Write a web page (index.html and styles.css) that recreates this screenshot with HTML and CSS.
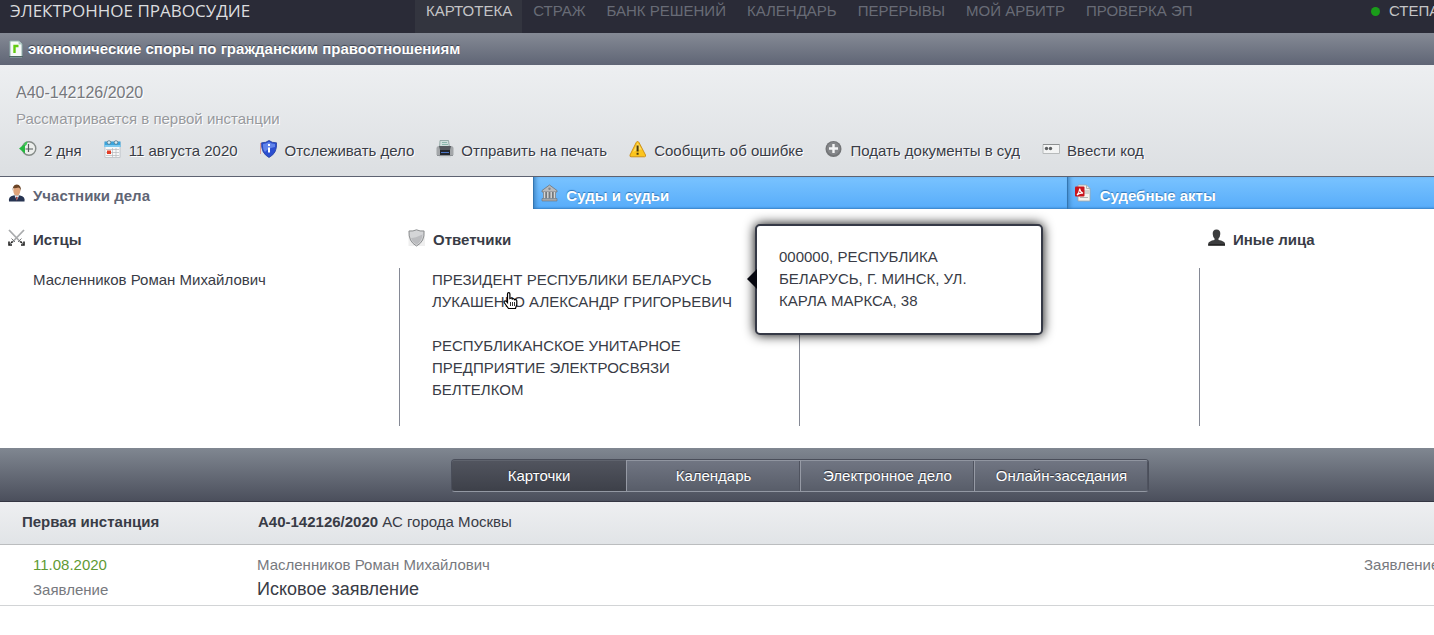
FILE: index.html
```html
<!DOCTYPE html>
<html lang="ru">
<head>
<meta charset="utf-8">
<title>А40-142126/2020 — Электронное правосудие</title>
<link rel="stylesheet" href="styles.css">
</head>
<body>
<div class="page">
  <header class="top">
    <div class="logo">ЭЛЕКТРОННОЕ ПРАВОСУДИЕ</div>
    <nav class="nav">
      <a class="nav-link nav-link-active" href="#">КАРТОТЕКА</a>
      <a class="nav-link" href="#">СТРАЖ</a>
      <a class="nav-link" href="#">БАНК РЕШЕНИЙ</a>
      <a class="nav-link" href="#">КАЛЕНДАРЬ</a>
      <a class="nav-link" href="#">ПЕРЕРЫВЫ</a>
      <a class="nav-link" href="#">МОЙ АРБИТР</a>
      <a class="nav-link" href="#">ПРОВЕРКА ЭП</a>
    </nav>
    <div class="user"><span class="user-dot"></span>СТЕПА</div>
  </header>

  <div class="category">
    <svg class="category-icon" width="14" height="18" viewBox="0 0 14 18"><path d="M1 1h9l3 3v13H1z" fill="#f6faf8" stroke="#8fb0ab"/><path d="M10 1v3h3" fill="#c5d8d4" stroke="#8fb0ab" stroke-width=".6"/><path d="M0 16.500h14" stroke="#4e6664"/><path d="M5.500 13V6H9.500" fill="none" stroke="#63cc12" stroke-width="2.400"/></svg>
    <h1 class="category-name">экономические споры по гражданским правоотношениям</h1>
  </div>

  <section class="case">
    <div class="case-number">А40-142126/2020</div>
    <div class="case-status">Рассматривается в первой инстанции</div>
    <div class="tools">
      <span class="tool">
        <svg class="tool-icon" width="18" height="18" viewBox="0 0 18 18"><circle cx="10" cy="8.500" r="6.800" fill="#eceeec" stroke="#858b88" stroke-width="1.400"/><path d="M9.500 4v5h4.500M6.500 9H10M9.500 9v3" fill="none" stroke="#555b5a" stroke-width="1.200"/><path d="M0 8.500 6 3.500V6Q8 5.500 8.500 1.500Q5 2 4.500 5z" fill="#3fca55"/><path d="M0 8.500 6 4v9.500z" fill="#25b93f"/></svg>
        <span>2 дня</span>
      </span>
      <span class="tool">
        <svg class="tool-icon" width="18" height="18" viewBox="0 0 18 18"><rect x="1" y="2" width="15" height="15.500" fill="#f8f8f8" stroke="#a9b0b6" stroke-width=".6"/><path d="M.5 1.500h16V7H.500z" fill="#3aa4dc"/><path d="M.5 5h16v2H.500z" fill="#7dcaf0"/><circle cx="5" cy="2.500" r="1.800" fill="#d5eefa" stroke="#5b7886" stroke-width=".8"/><circle cx="12" cy="2.500" r="1.800" fill="#d5eefa" stroke="#5b7886" stroke-width=".8"/><path d="M2 9.500h13M2 12.500h13M2 15.500h13M8.500 8v9M12 8v9" stroke="#b4b8bc" stroke-width=".7"/><path d="M3 10.500h4V14H3z" fill="#e23c26"/></svg>
        <span>11 августа 2020</span>
      </span>
      <button class="tool" type="button">
        <svg class="tool-icon" width="18" height="18" viewBox="0 0 18 18"><path d="M.5 3v11" stroke="#d98b85" stroke-width=".8"/><path d="M9 .5Q12 3 16.500 2.800Q17.500 13 9 17.500Q.8 13 1.600 2.800Q6 3 9 .5Z" fill="#2c4fd0" stroke="#203a9e" stroke-width=".8"/><path d="M9 2Q5.500 4 3 4Q2.500 9 5 12Q8 8 15 7L15 4Q11.500 4 9 2Z" fill="#6284ea"/><path d="M9 4v2M9 7.500v5" stroke="#fff" stroke-width="2"/></svg>
        <span>Отслеживать дело</span>
      </button>
      <button class="tool" type="button">
        <svg class="tool-icon" width="18" height="18" viewBox="0 0 18 18"><path d="M4 .5h8.500l1 7h-10z" fill="#cfe0dc" stroke="#87a09b" stroke-width=".8"/><path d="M6 2.500h5M6 4.500h6" stroke="#8bb8ac"/><path d="M.5 8.500Q.5 6 3 6h12Q17.500 6 17.500 8.500V15H.500z" fill="#a4a7aa"/><path d="M3 6h12l-1 4H4z" fill="#555a5e"/><path d="M4 10h10v5H4z" fill="#23262c"/><path d="M5 12.500h8" stroke="#4e76c5"/><path d="M3.500 15h11l.5 2.500H3z" fill="#d0d4d6"/><path d="M1 15.500h16" stroke="#6c7074" stroke-width=".7"/></svg>
        <span>Отправить на печать</span>
      </button>
      <button class="tool" type="button">
        <svg class="tool-icon" width="18" height="18" viewBox="0 0 18 18"><path d="M8.500 1.500Q9.500 1.500 10 2.500L16.500 15Q17 16.800 15.500 16.800H2Q.5 16.800 1 15L7.200 2.500Q7.700 1.500 8.500 1.500Z" fill="#fcc51e" stroke="#c98a10" stroke-width=".9"/><path d="M8.500 3 4 12Q8 9 13 9.500Z" fill="#ffe680" opacity=".7"/><path d="M8.600 5.500v6M8.600 12.800v2" stroke="#483809" stroke-width="2"/></svg>
        <span>Сообщить об ошибке</span>
      </button>
      <button class="tool" type="button">
        <svg class="tool-icon" width="18" height="18" viewBox="0 0 18 18"><circle cx="8.500" cy="9" r="8" fill="#737577"/><circle cx="8.500" cy="8.500" r="6.500" fill="#85878a"/><path d="M8.500 4v9M4 8.500h9" stroke="#f4f5f6" stroke-width="2.400"/></svg>
        <span>Подать документы в суд</span>
      </button>
      <button class="tool" type="button">
        <svg class="tool-icon" width="18" height="18" viewBox="0 0 18 18"><path d="M1 4.500h16.500v9H1z" fill="#f3f4f4" stroke="#b7babb"/><path d="M1 4.500h16.500" stroke="#8d9091"/><circle cx="4.500" cy="8.500" r="1.700" fill="#5b5e60"/><circle cx="8.500" cy="8.500" r="1.700" fill="#5b5e60"/></svg>
        <span>Ввести код</span>
      </button>
    </div>
  </section>

  <div class="tabs">
    <button class="tab tab-active" type="button">
      <svg class="tab-icon" width="18" height="18" viewBox="0 0 18 18"><path d="M1 17.500Q0 12.500 5.500 11.500L8.500 10.500 12 11.500Q17.500 12.500 16.500 17.500z" fill="#273452"/><path d="m6.300 11.200 2.500 5 2.500-5z" fill="#eef1f5"/><path d="m8.800 12.500-.9 1 .9 3.500 1-3.500z" fill="#9c3434"/><ellipse cx="8.800" cy="6.800" rx="3.500" ry="4.800" fill="#dfa47b"/><path d="M4.800 7Q4 1 8.800.500Q13.600 1 12.800 7Q12.500 4 10.500 3.500Q7 4.500 5.500 4Q5 5 4.800 7Z" fill="#6b4426"/></svg>
      <span>Участники дела</span>
    </button>
    <button class="tab" type="button">
      <svg class="tab-icon" width="18" height="18" viewBox="0 0 18 18"><path d="M1 6.500 8.500 1 16 6.500V8H1z" fill="#b9babb" stroke="#6f7478" stroke-width=".8"/><path d="M2 8h13v6H2z" fill="#74787b"/><path d="M3.500 8v7M6.800 8v7M10.200 8v7M13.500 8v7" stroke="#d4d5d6" stroke-width="1.500"/><path d="M1 14.500h15V17H1z" fill="#a5a7a8" stroke="#6f7478" stroke-width=".6"/><circle cx="8.500" cy="4.700" r="1.200" fill="#818589"/></svg>
      <span>Суды и судьи</span>
    </button>
    <button class="tab" type="button">
      <svg class="tab-icon" width="18" height="18" viewBox="0 0 18 18"><path d="M3 1h8.500L15 4.500V17H3z" fill="#f2f2ef" stroke="#a4a6a4" stroke-width=".8"/><path d="M11.500 1v3.500H15M9 7h5M9 9h5M5 13.500h8" fill="none" stroke="#aaaeaa" stroke-width=".9"/><rect x="0" y="2.500" width="9.500" height="10" rx="1" fill="#c9141d"/><path d="M2 11Q4.500 8 4.700 4.500Q5 8 8 9.300Q4.500 8.500 2 11Z" fill="none" stroke="#fff" stroke-width="1.100"/></svg>
      <span>Судебные акты</span>
    </button>
  </div>

  <section class="sides">
    <div class="side">
      <h2 class="side-title">
        <svg width="18" height="18" viewBox="0 0 18 18"><path d="m1 1 12 12.500M16 1 4 13.500" stroke="#a9abad" stroke-width="1.800"/><path d="m10 13 3.500-3.500M3.500 9.500 7 13M12.500 12.500l3.500 3.500M4.500 12.500 1 16" stroke="#77797a" stroke-width="1"/><path d="M1 12.500v3.500h3M16 12.500v3.500h-3M3 14l1.500-1.500M14 14l-1.500-1.500" fill="none" stroke="#222" stroke-width="1.600"/></svg>
        Истцы
      </h2>
      <ul class="side-list">
        <li>Масленников Роман Михайлович</li>
      </ul>
    </div>
    <div class="side">
      <h2 class="side-title">
        <svg width="18" height="18" viewBox="0 0 18 18"><path d="M.5 1.500h16.500v15.500H.500z" fill="#e8e8e8" opacity=".7"/><path d="M8.500.800Q12 2.500 16 2Q17 12.500 8.500 17Q.3 12.500 1 2Q5 2.500 8.500.800Z" fill="#d4d5d7" stroke="#8c8e90"/><path d="M3 9Q7 9 14.500 5.500Q14 12.500 8.500 15.500Q4.500 13.500 3 9Z" fill="#bbbcbf"/></svg>
        Ответчики
      </h2>
      <ul class="side-list">
        <li>ПРЕЗИДЕНТ РЕСПУБЛИКИ БЕЛАРУСЬ ЛУКАШЕНКО АЛЕКСАНДР ГРИГОРЬЕВИЧ
          <svg class="pointer" width="16" height="18" viewBox="0 0 16 18"><path d="M4.500 10V2Q4.500.7 5.700.7Q6.900.7 6.900 2V6.500Q8.800 5.300 9.300 7Q11 6 11.700 7.800Q13.700 7.300 13.800 9V12.500L12.500 16.500H5.500L1.500 11Q.5 9.500 1.700 9Q3 8.700 4.500 10.500Z" fill="#fff" stroke="#000" stroke-width="1.200"/><path d="M7.500 10v4M9.500 10v4M11.500 10v4" stroke="#000" stroke-width=".8"/></svg>
          <div class="tooltip" role="tooltip">000000, РЕСПУБЛИКА БЕЛАРУСЬ, Г. МИНСК, УЛ. КАРЛА МАРКСА, 38</div>
        </li>
        <li>РЕСПУБЛИКАНСКОЕ УНИТАРНОЕ ПРЕДПРИЯТИЕ ЭЛЕКТРОСВЯЗИ БЕЛТЕЛКОМ</li>
      </ul>
    </div>
    <div class="side">
      <h2 class="side-title"></h2>
      <ul class="side-list"></ul>
    </div>
    <div class="side">
      <h2 class="side-title">
        <svg width="18" height="18" viewBox="0 0 18 18"><path d="M8.500.500Q12.500.500 12.300 5Q12 8.500 10.500 9.500V11Q16.500 12 17 14.500V16.500H.200V14.500Q.8 12 6.500 11V9.500Q5 8.500 4.700 5Q4.500.500 8.500.500Z" fill="#3c3d3e"/><path d="M.2 16h16.800" stroke="#161616" stroke-width="1.200"/></svg>
        Иные лица
      </h2>
      <ul class="side-list"></ul>
    </div>
  </section>

  <div class="views">
    <div class="view-group">
      <button class="view view-active" type="button">Карточки</button>
      <button class="view" type="button">Календарь</button>
      <button class="view" type="button">Электронное дело</button>
      <button class="view" type="button">Онлайн-заседания</button>
    </div>
  </div>

  <section class="instance">
    <strong>Первая инстанция</strong>
    <span><strong>А40-142126/2020</strong> АС города Москвы</span>
  </section>
  <article class="document">
    <div>
      <div class="document-date">11.08.2020</div>
      <div class="document-note">Заявление</div>
    </div>
    <div>
      <div class="document-note">Масленников Роман Михайлович</div>
      <div class="document-title">Исковое заявление</div>
    </div>
    <div class="document-note">Заявление</div>
  </article>
</div>
</body>
</html>
```

FILE: styles.css
```css
* { box-sizing: border-box; }

html { overflow: hidden; }

body {
  margin: 0;
  background: #fff;
  color: #393c46;
  font: 15px/22px "Liberation Sans", Arial, sans-serif;
}

button {
  margin: 0;
  border: 0;
  padding: 0;
  background: none;
  color: inherit;
  font: inherit;
  text-shadow: inherit;
}

h1, h2, ul { margin: 0; padding: 0; font-size: 15px; }
ul { list-style: none; }
svg { display: block; flex: none; overflow: visible; }

.page { min-width: 1600px; }

/* Header */
.top { display: flex; background: #2a2b37; }
.logo {
  width: 415px;
  padding-left: 10px;
  color: #dcdddf;
  font: 17px/22px "Open Sans", "Noto Sans", sans-serif;
}
.nav { display: flex; }
.nav-link {
  padding: 0 10px 11px 11px;
  color: #686b76;
  text-decoration: none;
}
.nav-link-active { background: #33353f; color: #c4c4c6; }
.user {
  display: flex;
  gap: 9px;
  width: 229px;
  margin-left: auto;
  color: #c4c4c6;
}
.user-dot { width: 9px; height: 9px; margin-top: 7px; border-radius: 50%; background: #1a9c1a; }

.category {
  display: flex;
  align-items: center;
  gap: 5px;
  height: 32px;
  padding-left: 9px;
  background: linear-gradient(#858a95, #5f6575);
  color: #fff;
  text-shadow: 0 -1px 1px #3b404e;
}
.category-name { line-height: 22px; }

/* Case summary */
.case {
  padding: 17px 16px 12px;
  border-bottom: 1px solid #5d6271;
  background: linear-gradient(#edeff1, #dcdfe2);
  text-shadow: 1px 1px 0 #fff;
}
.case-number { color: #76787d; font-size: 16px; }
.case-status { margin-top: 4px; color: #97999d; }
.tools { display: flex; gap: 22px; margin-top: 8px; padding-left: 3px; }
.tool { display: flex; gap: 7px; padding: 2px 0; }

/* Tabs */
.tabs { display: grid; grid-template-columns: repeat(3, 1fr); }
.tab {
  display: flex;
  gap: 7px;
  height: 32px;
  padding: 7px 8px 0;
  background: linear-gradient(#79c3ff, #57acfa);
  box-shadow: inset 5px 0 5px -3px #3478b5, inset 1px 0 0 #3874aa, inset 0 -2px 2px -1px #3b86c9;
  color: #fff;
  font-weight: bold;
  text-shadow: 0 -1px 1px #2e74b5;
}
.tab > span { padding-top: 1px; }
.tab-active {
  background: #fff;
  box-shadow: none;
  color: #5f6575;
  text-shadow: none;
}

/* Parties */
.sides {
  display: grid;
  grid-template-columns: repeat(4, 1fr);
  padding: 20px 0 22px;
}
.side { display: grid; grid-template-rows: 22px 1fr; gap: 17px; }
.side-title { display: flex; gap: 7px; padding-left: 8px; }
.side-list { padding: 1px 60px 25px 33px; }
.side + .side .side-list { margin-left: -1px; border-left: 1px solid #858995; padding-left: 32px; }
.side-list li { position: relative; }
.side-list li + li { margin-top: 22px; }

.pointer { position: absolute; top: 23px; left: 71px; }
.tooltip {
  position: absolute;
  z-index: 1;
  top: -45px;
  left: 323px;
  width: 288px;
  padding: 20px 60px 21px 22px;
  border: 2px solid #353946;
  border-radius: 5px;
  background: #fff;
  box-shadow: 0 0 12px #000;
}
.tooltip::before {
  content: "";
  position: absolute;
  top: 43px;
  left: -10px;
  border: 10px solid transparent;
  border-left: 0;
  border-right-color: #06070f;
}

/* View switch */
.views {
  display: flex;
  justify-content: center;
  padding: 11px 0 9px;
  border-bottom: 1px solid #343643;
  background: linear-gradient(#808791, #4b4f5c);
}
.view-group {
  display: grid;
  grid-template-columns: repeat(4, 1fr);
  width: 698px;
  border: 1px solid #4a4e5a;
  border-bottom-color: #9398a3;
  border-radius: 4px;
  overflow: hidden;
}
.view {
  height: 31px;
  border-left: 1px solid #969aa5;
  background: linear-gradient(#717683, #585d69);
  box-shadow: inset 0 1px 0 #9095a0, inset -1px 0 0 #4f535f;
  color: #fff;
  text-shadow: 0 -1px 1px #2b2e38;
}
.view-active {
  border-left: 0;
  background: linear-gradient(#52555f, #3d4049);
  box-shadow: inset 0 1px 0 #5f636d;
}

/* Instance and its documents */
.instance {
  display: grid;
  grid-template-columns: 236px 1fr;
  padding: 9px 22px 11px;
  border-bottom: 1px solid #bbbdbf;
  background: linear-gradient(#eeeff1, #e1e4e7);
}
.document {
  display: grid;
  grid-template-columns: 224px 1fr 236px;
  padding: 9px 0 4px 33px;
  border-bottom: 1px solid #d2d4d6;
}
.document-date { color: #609a34; }
.document-note { color: #77797e; }
.document-date + .document-note { margin-top: 3px; }
.document-title { margin-top: 2px; font-size: 18px; }
```
